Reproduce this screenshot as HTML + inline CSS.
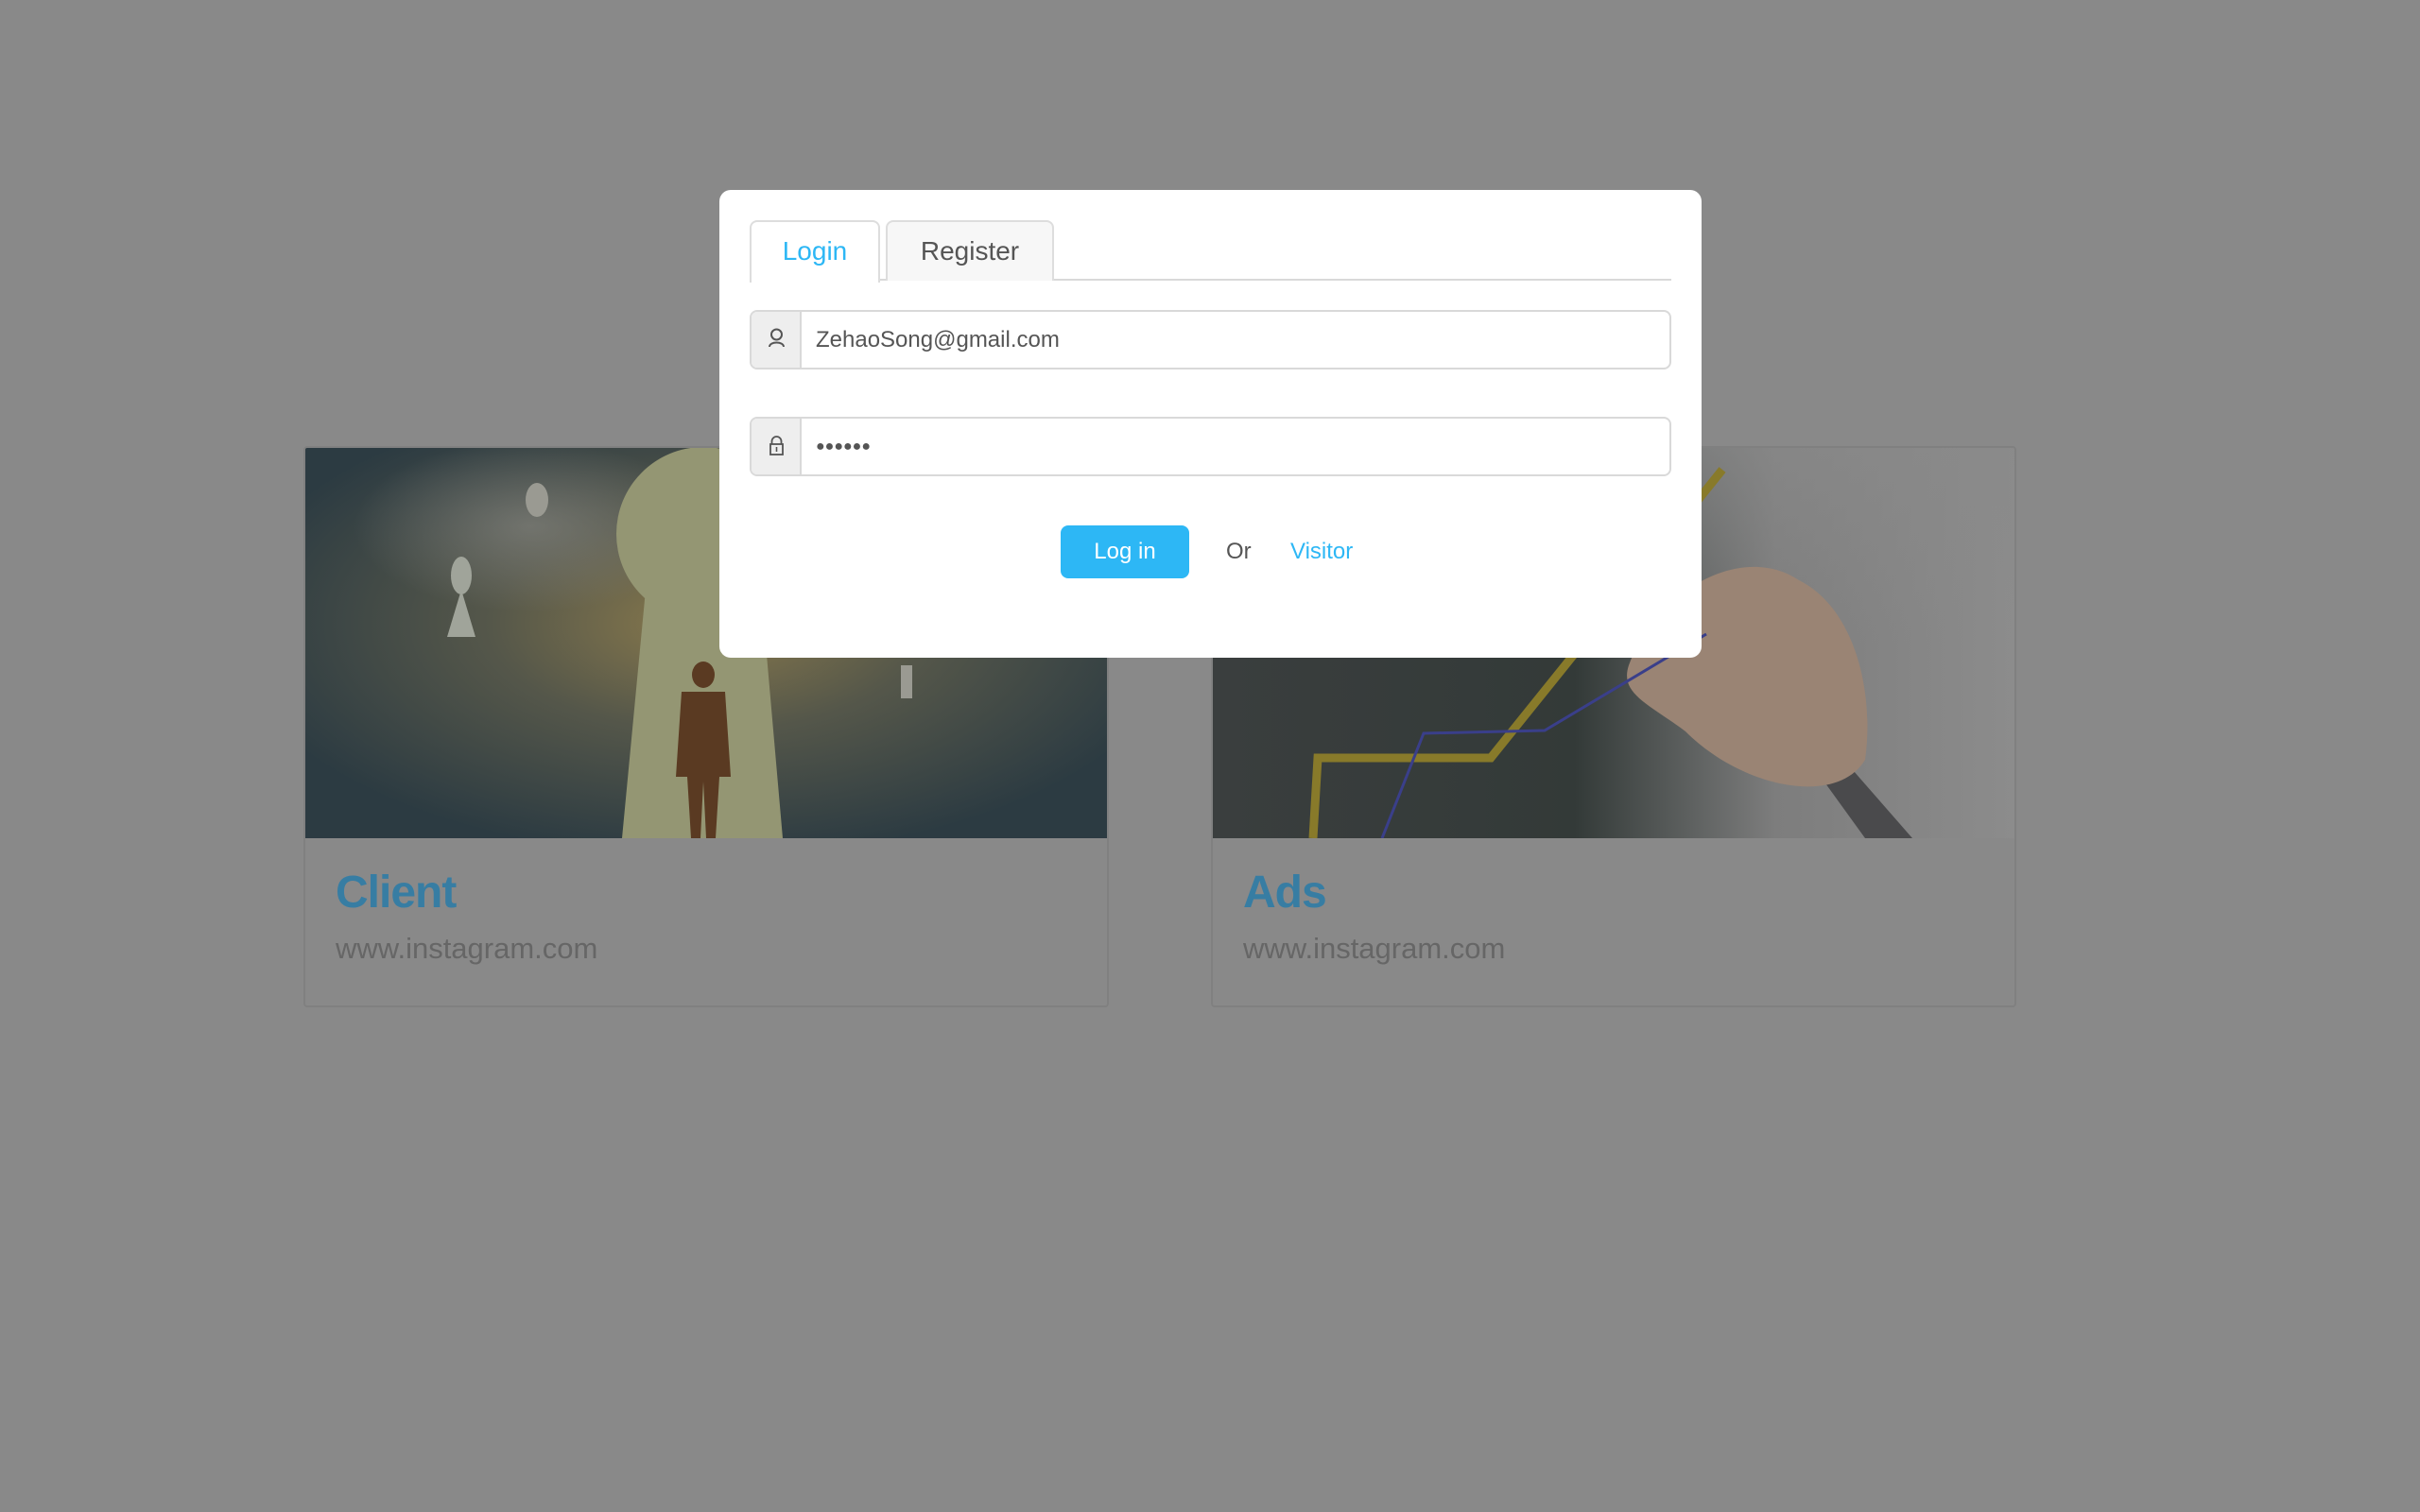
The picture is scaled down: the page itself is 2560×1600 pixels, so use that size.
<!DOCTYPE html>
<html><head><meta charset="utf-8"><style>
*{margin:0;padding:0;box-sizing:border-box}
body{width:2560px;height:1600px;background:#898989;position:relative;overflow:hidden;font-family:"Liberation Sans",sans-serif}
.card{position:absolute;top:472px;width:852px;height:594px;border:2px solid #808080;border-radius:4px;background:#898989;overflow:hidden}
.img{position:absolute;left:0;top:0;width:850px;height:413px;overflow:hidden}
.title{position:absolute;left:32px;top:443px;font-size:48px;font-weight:bold;color:#377da3;letter-spacing:-1px}
.url{position:absolute;left:32px;top:512px;font-size:31px;color:#666}
.modal{position:absolute;left:761px;top:201px;width:1039px;height:495px;background:#fff;border-radius:12px}
.tab{position:absolute;top:32px;height:64px;border:2px solid #ddd;border-bottom:none;border-radius:8px 8px 0 0;font-size:28px;text-align:center;line-height:62px}
.inp{position:absolute;left:32px;width:975px;height:63px;border:2px solid #d9d9d9;border-radius:8px;overflow:hidden}
.add{position:absolute;left:0;top:0;width:53px;height:100%;background:#eee;border-right:2px solid #d9d9d9}
.txt{position:absolute;left:68px;top:0;line-height:59px;font-size:24px;color:#555}
</style></head><body>
<div class="card" style="left:321px">
 <div class="img">
  <svg width="850" height="413">
   <defs>
    <radialGradient id="g1" cx="0.5" cy="0.45" r="0.6"><stop offset="0" stop-color="#8a7a4c"/><stop offset="0.45" stop-color="#55574a"/><stop offset="1" stop-color="#2c3b42"/></radialGradient>
    <radialGradient id="g2" cx="0.28" cy="0.2" r="0.22"><stop offset="0" stop-color="#8a8a86" stop-opacity="0.6"/><stop offset="1" stop-color="#8a8a86" stop-opacity="0"/></radialGradient>
   </defs>
   <rect width="850" height="413" fill="url(#g1)"/>
   <rect width="850" height="413" fill="url(#g2)"/>
   <circle cx="421" cy="91" r="92" fill="#949673"/>
   <polygon points="360,150 482,150 505,413 335,413" fill="#949673"/>
   <ellipse cx="245" cy="55" rx="12" ry="18" fill="#9a9a92"/>
   <ellipse cx="165" cy="135" rx="11" ry="20" fill="#a0a49a"/>
   <polygon points="165,150 150,200 180,200" fill="#a0a49a"/>
   <rect x="630" y="230" width="12" height="35" fill="#9a9a92"/>
   <ellipse cx="421" cy="240" rx="12" ry="14" fill="#5a3a22"/>
   <path d="M398,258 h46 l6,90 h-12 l-4,65 h-10 l-3,-60 l-3,60 h-10 l-4,-65 h-12 z" fill="#5a3a22"/>
  </svg>
 </div>
 <div class="title">Client</div>
 <div class="url">www.instagram.com</div>
</div>
<div class="card" style="left:1281px">
 <div class="img">
  <svg width="850" height="413">
   <defs>
    <linearGradient id="h1" x1="0" x2="1"><stop offset="0" stop-color="#3a3e3e"/><stop offset="0.45" stop-color="#333a38"/><stop offset="0.7" stop-color="#7d7d7d"/><stop offset="1" stop-color="#8c8c8c"/></linearGradient>
    <linearGradient id="h2" x1="0" y1="0" x2="0" y2="1"><stop offset="0" stop-color="#8a8a8a" stop-opacity="0.7"/><stop offset="0.5" stop-color="#8a8a8a" stop-opacity="0"/></linearGradient>
   </defs>
   <rect width="850" height="413" fill="url(#h1)"/>
   <rect width="850" height="413" fill="url(#h2)"/>
   <path d="M650,310 L740,413 L690,413 L630,330 Z" fill="#4a4a4c"/>
   <path d="M440,230 C470,150 560,100 620,140 C680,170 700,260 690,330 C660,380 560,360 500,300 C460,270 430,260 440,230 Z" fill="#9a8474"/>
   <path d="M106,413 L111,328 L294,328 L539,23" fill="none" stroke="#887a2a" stroke-width="9"/>
   <path d="M179,413 L223,302 L351,299 L522,197" fill="none" stroke="#3a3f8a" stroke-width="3"/>
  </svg>
 </div>
 <div class="title">Ads</div>
 <div class="url">www.instagram.com</div>
</div>
<div class="modal">
 <div style="position:absolute;left:32px;top:94px;width:975px;height:2px;background:#d9d9d9"></div>
 <div class="tab" style="left:32px;width:138px;height:66px;background:#fff;color:#2db7f5">Login</div>
 <div class="tab" style="left:176px;width:178px;background:#f7f7f7;color:#555">Register</div>
 <div class="inp" style="top:127px"><div class="add">
  <svg width="53" height="59" viewBox="0 0 53 59"><circle cx="26.5" cy="24" r="5.5" fill="none" stroke="#555" stroke-width="2"/><path d="M19,37 C19,31 34,31 34,37" fill="none" stroke="#555" stroke-width="2"/></svg>
 </div><div class="txt">ZehaoSong@gmail.com</div></div>
 <div class="inp" style="top:240px"><div class="add">
  <svg width="53" height="59" viewBox="0 0 53 59"><rect x="20" y="27" width="13" height="11" fill="none" stroke="#555" stroke-width="1.8"/><path d="M21.5,27 v-3 a5,5 0 0 1 10,0 v3" fill="none" stroke="#555" stroke-width="1.8"/><line x1="26.5" y1="30" x2="26.5" y2="35" stroke="#555" stroke-width="1.6"/></svg>
 </div><div class="txt" style="font-size:16px;letter-spacing:0px">●●●●●●</div></div>
 <div style="position:absolute;left:361px;top:355px;width:136px;height:56px;background:#2db7f5;border-radius:8px;color:#fff;font-size:24px;text-align:center;line-height:56px">Log in</div>
 <div style="position:absolute;left:536px;top:355px;line-height:56px;font-size:24px;color:#555">Or</div>
 <div style="position:absolute;left:604px;top:355px;line-height:56px;font-size:24px;color:#2db7f5">Visitor</div>
</div>
</body></html>
